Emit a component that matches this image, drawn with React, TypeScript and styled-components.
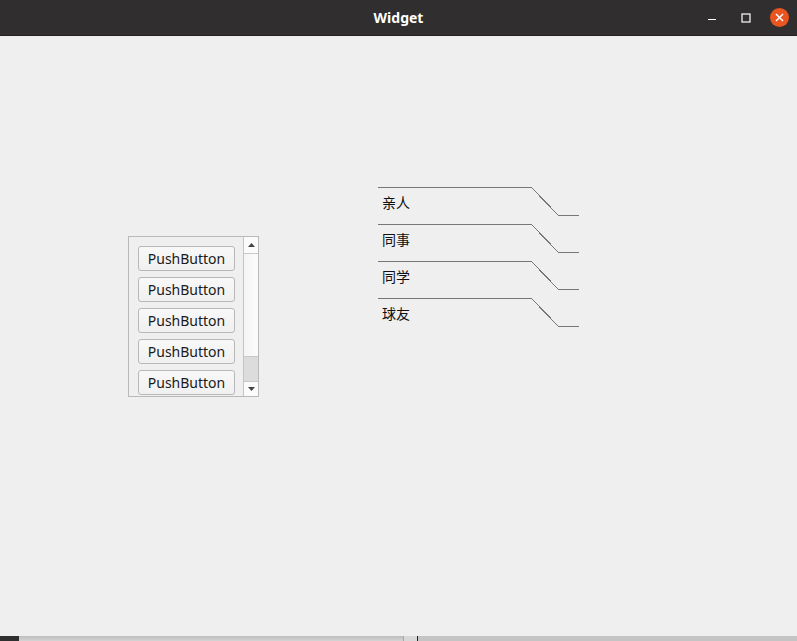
import React from "react";
import styled, { createGlobalStyle } from "styled-components";

const GlobalStyle = createGlobalStyle`
  html, body {
    margin: 0;
    padding: 0;
    width: 797px;
    height: 641px;
    overflow: hidden;
    background: #efefef;
  }
  #root {
    width: 797px;
    height: 641px;
  }
`;

const Window = styled.div`
  width: 797px;
  height: 641px;
  display: flex;
  flex-direction: column;
  font-family: "Noto Sans", "Noto Sans CJK SC", sans-serif;
`;

const TitleBar = styled.div`
  height: 35px;
  flex-shrink: 0;
  background: #302e2e;
  border-bottom: 1px solid #232121;
  display: flex;
  align-items: center;
  position: relative;
`;

const Title = styled.div`
  flex: 1;
  text-align: center;
  color: #ffffff;
  font-weight: 700;
  font-size: 14px;
`;

const Controls = styled.div`
  position: absolute;
  right: 8px;
  top: 0;
  height: 35px;
  display: flex;
  align-items: center;
  gap: 14px;
`;

const CtlButton = styled.div`
  width: 20px;
  height: 20px;
  display: flex;
  align-items: center;
  justify-content: center;
`;

const CloseCircle = styled.div`
  width: 19px;
  height: 19px;
  border-radius: 50%;
  background: #e95420;
  display: flex;
  align-items: center;
  justify-content: center;
`;

const Canvas = styled.div`
  flex: 1;
  display: flex;
  align-items: flex-start;
  padding-left: 128px;
  background: #efefef;
`;

const ScrollBox = styled.div`
  margin-top: 200px;
  width: 129px;
  height: 159px;
  border: 1px solid #b9b9b9;
  display: flex;
  background: #efefef;
`;

const ButtonColumn = styled.div`
  flex: 1;
  display: flex;
  flex-direction: column;
  gap: 6px;
  padding: 9px 0 0 9px;
  overflow: hidden;
`;

const PushButton = styled.button`
  width: 97px;
  height: 25px;
  flex-shrink: 0;
  box-sizing: border-box;
  border: 1px solid #b8b8b8;
  border-radius: 3px;
  background: linear-gradient(#f8f8f8, #f0f0f0);
  font-family: "Noto Sans", sans-serif;
  font-size: 14px;
  color: #1a1a1a;
  padding: 0;
  line-height: 22px;
`;

const ScrollBar = styled.div`
  width: 14px;
  border-left: 1px solid #c4c4c4;
  display: flex;
  flex-direction: column;
  background: #f8f8f8;
`;

const ArrowBtn = styled.div<{ $h: number; $top?: boolean }>`
  height: ${(p) => p.$h}px;
  flex-shrink: 0;
  display: flex;
  align-items: center;
  justify-content: center;
  background: #fbfbfb;
  border-bottom: ${(p) => (p.$top ? "1px solid #c8c8c8" : "none")};
  border-top: ${(p) => (p.$top ? "none" : "1px solid #c8c8c8")};
`;

const Track = styled.div`
  flex: 1;
  display: flex;
  flex-direction: column;
  justify-content: flex-end;
  background: linear-gradient(90deg, #f4f4f4, #fcfcfc);
`;

const Handle = styled.div`
  height: 24px;
  background: #dcdcdc;
  border-top: 1px solid #c8c8c8;
`;

const Tabs = styled.div`
  margin-top: 151px;
  margin-left: 119px;
  display: flex;
  flex-direction: column;
`;

const TabRow = styled.div`
  position: relative;
  width: 201px;
  height: 37px;
`;

const TabLine = styled.svg`
  position: absolute;
  left: 0;
  top: 0;
`;

const TabLabel = styled.div`
  position: relative;
  padding: 5px 0 0 4px;
  font-family: "Noto Sans CJK SC", sans-serif;
  font-size: 14px;
  line-height: 20px;
  color: #111;
`;

const BottomStrip = styled.div`
  height: 5px;
  flex-shrink: 0;
  display: flex;
  background: #c9c9c9;
`;

const StripDark = styled.div`
  width: 19px;
  background: #2f2f2f;
`;

const StripMid = styled.div`
  width: 384px;
  background: linear-gradient(#bdbdbd, #d4d4d4);
  border-right: 1px solid #a8a8a8;
`;

const StripGap = styled.div`
  width: 13px;
  background: #d8d8d8;
  border-right: 1px solid #222;
`;

const StripRest = styled.div`
  flex: 1;
  background: #c4c4c4;
`;

const tabs = ["亲人", "同事", "同学", "球友"];

export default function App() {
  return (
    <>
      <GlobalStyle />
      <Window>
        <TitleBar>
          <Title>Widget</Title>
          <Controls>
            <CtlButton>
              <svg width="10" height="10" viewBox="0 0 10 10">
                <rect x="1" y="6" width="8" height="1" fill="#ffffff" />
              </svg>
            </CtlButton>
            <CtlButton>
              <svg width="10" height="10" viewBox="0 0 10 10">
                <rect x="1" y="1" width="8" height="8" fill="none" stroke="#ffffff" strokeWidth="1.2" />
              </svg>
            </CtlButton>
            <CloseCircle>
              <svg width="9" height="9" viewBox="0 0 9 9">
                <path d="M1 1 L8 8 M8 1 L1 8" stroke="#ffffff" strokeWidth="1.5" />
              </svg>
            </CloseCircle>
          </Controls>
        </TitleBar>
        <Canvas>
          <ScrollBox>
            <ButtonColumn>
              {[0, 1, 2, 3, 4].map((i) => (
                <PushButton key={i}>PushButton</PushButton>
              ))}
            </ButtonColumn>
            <ScrollBar>
              <ArrowBtn $h={16} $top>
                <svg width="7" height="4" viewBox="0 0 7 4">
                  <path d="M0 4 L3.5 0 L7 4 Z" fill="#444" />
                </svg>
              </ArrowBtn>
              <Track>
                <Handle />
              </Track>
              <ArrowBtn $h={14}>
                <svg width="7" height="4" viewBox="0 0 7 4">
                  <path d="M0 0 L7 0 L3.5 4 Z" fill="#444" />
                </svg>
              </ArrowBtn>
            </ScrollBar>
          </ScrollBox>
          <Tabs>
            {tabs.map((t) => (
              <TabRow key={t}>
                <TabLine width="201" height="37" viewBox="0 0 201 37">
                  <path
                    d="M0 0.5 H153.5 L180.5 28.5 H200.5"
                    fill="none"
                    stroke="#777"
                    strokeWidth="1"
                    shapeRendering="crispEdges"
                  />
                </TabLine>
                <TabLabel>{t}</TabLabel>
              </TabRow>
            ))}
          </Tabs>
        </Canvas>
        <BottomStrip>
          <StripDark />
          <StripMid />
          <StripGap />
          <StripRest />
        </BottomStrip>
      </Window>
    </>
  );
}
